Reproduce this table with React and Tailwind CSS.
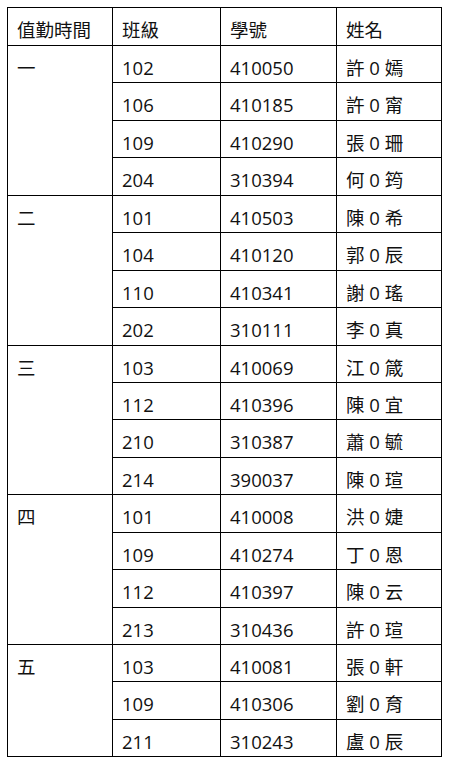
const groups = [
  {
    day: '一',
    rows: [
      ['102', '410050', '許 0 嫣'],
      ['106', '410185', '許 0 甯'],
      ['109', '410290', '張 0 珊'],
      ['204', '310394', '何 0 筠'],
    ],
  },
  {
    day: '二',
    rows: [
      ['101', '410503', '陳 0 希'],
      ['104', '410120', '郭 0 辰'],
      ['110', '410341', '謝 0 瑤'],
      ['202', '310111', '李 0 真'],
    ],
  },
  {
    day: '三',
    rows: [
      ['103', '410069', '江 0 箴'],
      ['112', '410396', '陳 0 宜'],
      ['210', '310387', '蕭 0 毓'],
      ['214', '390037', '陳 0 瑄'],
    ],
  },
  {
    day: '四',
    rows: [
      ['101', '410008', '洪 0 婕'],
      ['109', '410274', '丁 0 恩'],
      ['112', '410397', '陳 0 云'],
      ['213', '310436', '許 0 瑄'],
    ],
  },
  {
    day: '五',
    rows: [
      ['103', '410081', '張 0 軒'],
      ['109', '410306', '劉 0 育'],
      ['211', '310243', '盧 0 辰'],
    ],
  },
];

const cell = 'border border-black align-top pl-[9px] pt-[10px] leading-[24px]';

export default function App() {
  return (
    <div className="min-h-screen bg-white pt-[7px] pl-[7px] font-['Open_Sans','Noto_Sans_CJK_TC',sans-serif] text-[18.5px] text-[#111]">
      <table className="border-collapse table-fixed w-[434px]">
        <colgroup>
          <col className="w-[105px]" />
          <col className="w-[108px]" />
          <col className="w-[116px]" />
          <col className="w-[105px]" />
        </colgroup>
        <thead>
          <tr className="h-[38px]">
            <td className={cell}>值勤時間</td>
            <td className={cell}>班級</td>
            <td className={cell}>學號</td>
            <td className={cell}>姓名</td>
          </tr>
        </thead>
        <tbody>
          {groups.map((g) =>
            g.rows.map((r, i) => (
              <tr key={g.day + i} className="h-[37.45px]">
                {i === 0 && (
                  <td rowSpan={g.rows.length} className={cell}>
                    {g.day}
                  </td>
                )}
                <td className={cell}>{r[0]}</td>
                <td className={cell}>{r[1]}</td>
                <td className={cell}>{r[2]}</td>
              </tr>
            ))
          )}
        </tbody>
      </table>
    </div>
  );
}
